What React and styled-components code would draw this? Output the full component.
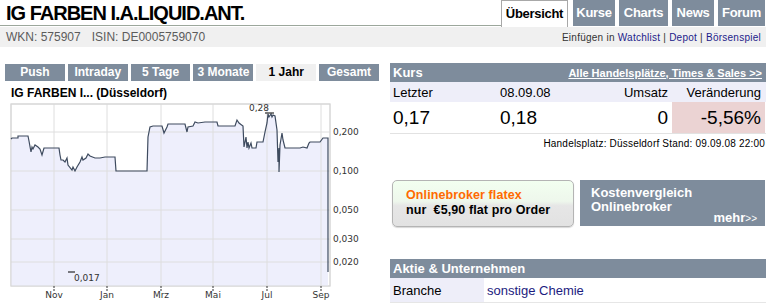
import styled, { createGlobalStyle } from "styled-components";

const GlobalStyle = createGlobalStyle`
  body {
    margin: 0;
    background: #fff;
    font-family: "Liberation Sans", Arial, sans-serif;
    color: #000;
  }
`

const SLATE = "#7e8c9c";
const LAVENDER = "#eeeef9";

const Page = styled.div`
  width: 766px;
  height: 304px;
  overflow: hidden;
`

const Header = styled.div`
  display: flex;
  align-items: flex-start;
  height: 27px;
  padding-right: 1px;
`
const Title = styled.h1`
  flex: 1;
  margin: 0;
  height: 26px;
  box-sizing: border-box;
  padding-left: 6px;
  border-bottom: 1px solid #9ca79c;
  font: bold 20px/27px "Liberation Sans", Arial, sans-serif;
  letter-spacing: -1px;
`
const TopTabs = styled.div`
  display: flex;
  gap: 4px;
`
const TopTab = styled.div`
  box-sizing: border-box;
  width: ${p => p.$w}px;
  height: ${p => (p.$active ? "27px" : "26px")};
  text-align: center;
  font: bold 13px/26px "Liberation Sans", Arial, sans-serif;
  letter-spacing: -0.3px;
  color: ${p => (p.$active ? "#000" : "#fff")};
  background: ${p => (p.$active ? "#fff" : SLATE)};
  border: ${p => (p.$active ? "1px solid #a8a8a8" : "none")};
  border-bottom: none;
  margin-right: ${p => (p.$active ? "1px" : "0")};
`

const SubBar = styled.div`
  display: flex;
  justify-content: space-between;
  align-items: center;
  height: 20px;
  padding: 0 5px 0 6px;
  background: #f0f0f0;
`
const Ident = styled.div`
  font-size: 12px;
  color: #5c5c5c;
  span + span {
    margin-left: 11px;
  }
`
const Actions = styled.div`
  font-size: 10px;
  letter-spacing: 0.25px;
  color: #333;
  a {
    color: #1c1c8a;
    text-decoration: none;
  }
`

const Main = styled.div`
  display: grid;
  grid-template-columns: 374px 376px;
  column-gap: 11px;
  padding: 16px 0 0 5px;
`

/* left: chart */
const PeriodTabs = styled.div`
  display: flex;
  gap: 3px;
  margin-top: 1px;
`
const PeriodTab = styled.div`
  flex: 1;
  height: 17px;
  text-align: center;
  font: bold 12px/17px "Liberation Sans", Arial, sans-serif;
  color: ${p => (p.$active ? "#000" : "#fff")};
  background: ${p => (p.$active ? "#f0f0f0" : SLATE)};
`
const ChartTitle = styled.div`
  height: 20px;
  box-sizing: border-box;
  padding: 4px 0 0 6px;
  font: bold 12px/16px "Liberation Sans", Arial, sans-serif;
`

/* right: quotes */
const BarHead = styled.div`
  display: flex;
  justify-content: space-between;
  align-items: center;
  height: 19px;
  padding: 0 4px 0 3px;
  background: ${SLATE};
  color: #fff;
  font: bold 13px "Liberation Sans", Arial, sans-serif;
  a {
    color: #fff;
    font-size: 11px;
    text-decoration: underline;
  }
`
const QuoteRow = styled.div`
  display: grid;
  grid-template-columns: 107px 85px 90px 93px;
  height: ${p => (p.$big ? "31px" : "20px")};
  align-items: stretch;
  font-size: ${p => (p.$big ? "19px" : "13px")};
  background: ${p => (p.$big ? "#fff" : LAVENDER)};
  border-bottom: ${p => (p.$big ? "1px solid #e2e2e2" : "none")};
`
const Cell = styled.div`
  display: flex;
  align-items: center;
  justify-content: ${p => (p.$right ? "flex-end" : "flex-start")};
  padding: ${p => (p.$right ? "0 4px 0 0" : "0 0 0 3px")};
  background: ${p => p.$bg || "transparent"};
`
const Stand = styled.div`
  margin-top: 4px;
  text-align: right;
  font-size: 10px;
  letter-spacing: 0.2px;
  padding-right: 1px;
`

const Promo = styled.div`
  display: grid;
  grid-template-columns: 182px 185px;
  column-gap: 6px;
  margin: 31px 0 0 2px;
`
const BrokerButton = styled.div`
  height: 47px;
  box-sizing: border-box;
  padding: 7px 0 0 13px;
  border: 1px solid #b4b4b4;
  border-radius: 5px;
  background: linear-gradient(#f2fff0 0%, #eef7ec 45%, #e6e6e6 55%, #e2e2e2 100%);
  box-shadow: 0 1px 1px #d8d8d8;
  font: bold 12.5px/15px "Liberation Sans", Arial, sans-serif;
  letter-spacing: 0.1px;
  em {
    display: block;
    font-style: normal;
    color: #ff6a00;
  }
`
const CompareBox = styled.div`
  display: flex;
  flex-direction: column;
  height: 46px;
  box-sizing: border-box;
  padding: 6px 8px 0 11px;
  background: ${SLATE};
  color: #fff;
  font: bold 13px/14px "Liberation Sans", Arial, sans-serif;
  small {
    align-self: flex-end;
    margin-top: -3px;
    font-size: 13px;
  }
  small i {
    font-style: normal;
    font-weight: normal;
    font-size: 10px;
  }
`
const Section = styled.div`
  margin-top: 32px;
`
const InfoRow = styled.div`
  display: grid;
  grid-template-columns: 94px 1fr;
  height: 24px;
  border-bottom: 1px solid #e6e6e6;
  font-size: 13px;
  div {
    display: flex;
    align-items: center;
    padding-left: 3px;
  }
  div:first-child {
    background: ${LAVENDER};
  }
  a {
    color: #1c1c80;
    text-decoration: none;
  }
`

const LINE = "11,139 12,138 18,138 18,136 28,136 29,141 31,152 32,147 33,149 35,145 38,147 40,149 42,155 44,148 59,148 60,155 61,160 63,160 65,162 67,158 68,165 72,170 73,167 75,171 77,167 80,162 82,157 83,160 86,158 88,154 90,156 95,158 100,158 105,157 115,157 116,171 147,171 148,137 150,127 153,126 162,126 164,133 167,127 168,124 185,124 187,132 188,127 193,126 195,122 198,123 205,122 217,122 218,126 235,126 237,120 239,123 243,126 244,147 246,137 247,148 248,142 249,148 251,143 252,148 256,148 257,142 263,142 265,132 267,123 268,114 269,117 271,114 272,117 273,115 275,116 277,130 278,162 279,148 279,172 280,145 282,133 283,140 285,148 300,148 303,147 307,148 309,143 310,142 320,142 323,138 328,138 328,272";

const GRID_X = [54, 107, 161, 213, 267, 321];
const GRID_Y = [[132, "0,200"], [171, "0,100"], [210, "0,050"], [239, "0,030"], [262, "0,020"]];
const MONTHS = ["Nov", "Jan", "Mrz", "Mai", "Jul", "Sep"];

function Chart() {
  return (
    <svg width="374" height="203" viewBox="5 101 374 203" style={{ display: "block" }}>
      <rect x="11" y="104" width="319" height="182" fill="#fff" stroke="#d6d6d6" />
      <polygon points={`${LINE} 328,286 11,286`} fill="#eeeffc" />
      {GRID_X.map(x => (
        <line key={x} x1={x} x2={x} y1="104" y2="286" stroke="#dedede" />
      ))}
      {GRID_Y.map(([y]) => (
        <line key={y} x1="11" x2="330" y1={y} y2={y} stroke="#dedede" />
      ))}
      <rect x="11" y="104" width="319" height="182" fill="none" stroke="#d6d6d6" />
      <polyline points={LINE} fill="none" stroke="#3e4b5f" strokeWidth="1.2" />
      <g fill="#333" fontSize="9" fontFamily="'DejaVu Sans', Verdana, sans-serif">
        {GRID_Y.map(([y, t]) => (
          <text key={t} x="333" y={y + 3}>{t}</text>
        ))}
        {GRID_X.map((x, i) => (
          <g key={x}>
            <line x1={x} x2={x} y1="286" y2="292" stroke="#333" strokeDasharray="2,1" />
            <text x={x} y="298" textAnchor="middle">{MONTHS[i]}</text>
          </g>
        ))}
        <text x="259" y="111" textAnchor="middle">0,28</text>
        <line x1="265" x2="274" y1="113" y2="113" stroke="#000" />
        <line x1="68" x2="75" y1="272" y2="272" stroke="#000" />
        <text x="74" y="281">0,017</text>
      </g>
    </svg>
  )
}

export default function App() {
  const periods = ["Push", "Intraday", "5 Tage", "3 Monate", "1 Jahr", "Gesamt"];
  const tabs = [["Übersicht", 67], ["Kurse", 42], ["Charts", 49], ["News", 42], ["Forum", 47]];
  return (
    <Page>
      <GlobalStyle />
      <Header>
        <Title>IG FARBEN I.A.LIQUID.ANT.</Title>
        <TopTabs>
          {tabs.map(([t, w], i) => (
            <TopTab key={t} $w={w} $active={i === 0}>{t}</TopTab>
          ))}
        </TopTabs>
      </Header>
      <SubBar>
        <Ident><span>WKN: 575907</span><span>ISIN: DE0005759070</span></Ident>
        <Actions>
          Einfügen in <a href="#">Watchlist</a> | <a href="#">Depot</a> | <a href="#">Börsenspiel</a>
        </Actions>
      </SubBar>

      <Main>
        <div>
          <PeriodTabs>
            {periods.map(p => (
              <PeriodTab key={p} $active={p === "1 Jahr"}>{p}</PeriodTab>
            ))}
          </PeriodTabs>
          <ChartTitle>IG FARBEN I... (Düsseldorf)</ChartTitle>
          <Chart />
        </div>

        <div>
          <BarHead>
            <span>Kurs</span>
            <a href="#">Alle Handelsplätze, Times &amp; Sales &gt;&gt;</a>
          </BarHead>
          <QuoteRow>
            <Cell>Letzter</Cell>
            <Cell>08.09.08</Cell>
            <Cell $right>Umsatz</Cell>
            <Cell $right>Veränderung</Cell>
          </QuoteRow>
          <QuoteRow $big>
            <Cell>0,17</Cell>
            <Cell>0,18</Cell>
            <Cell $right>0</Cell>
            <Cell $right $bg="#ebd3d3">-5,56%</Cell>
          </QuoteRow>
          <Stand>Handelsplatz: Düsseldorf Stand: 09.09.08 22:00</Stand>

          <Promo>
            <BrokerButton>
              <em>Onlinebroker flatex</em>
              nur&nbsp; €5,90 flat pro Order
            </BrokerButton>
            <CompareBox>
              <span>Kostenvergleich</span>
              <span>Onlinebroker</span>
              <small>mehr<i>&gt;&gt;</i></small>
            </CompareBox>
          </Promo>

          <Section>
            <BarHead><span>Aktie &amp; Unternehmen</span></BarHead>
            <InfoRow>
              <div>Branche</div>
              <div><a href="#">sonstige Chemie</a></div>
            </InfoRow>
          </Section>
        </div>
      </Main>
    </Page>
  )
}
